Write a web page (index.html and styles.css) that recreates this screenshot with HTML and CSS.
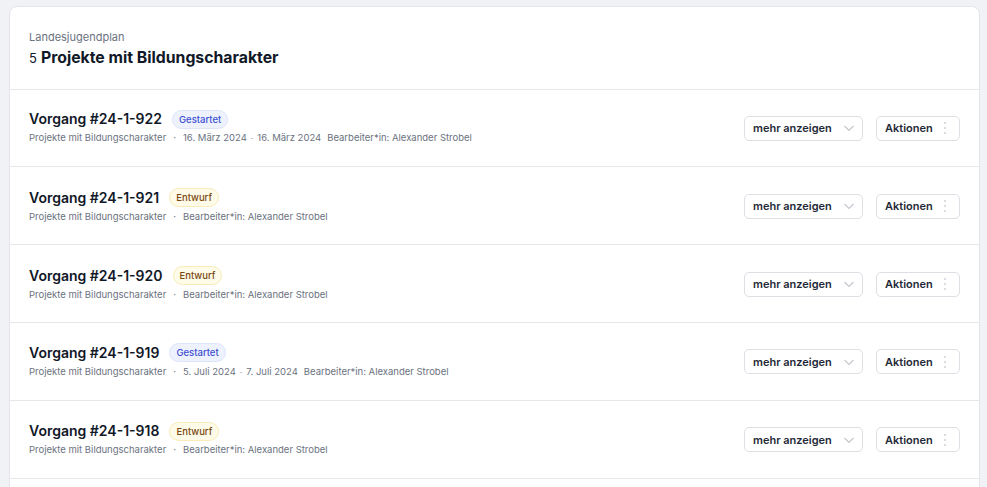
FILE: index.html
```html
<!DOCTYPE html>
<html lang="de">
<head>
<meta charset="utf-8">
<link rel="stylesheet" href="styles.css">
</head>
<body>
<div class="card">
  <header class="card-head">
    <div class="eyebrow">Landesjugendplan</div>
    <h1 class="heading"><span class="count">5</span>Projekte mit Bildungscharakter</h1>
  </header>
  <ul class="list">
    <li class="row">
      <div class="info">
        <div class="title-line"><span class="title">Vorgang #24-1-922</span><span class="badge badge-blue">Gestartet</span></div>
        <div class="meta"><span>Projekte mit Bildungscharakter</span><span class="dot">·</span><span>16. März 2024 <span class="dash">-</span> 16. März 2024</span><span class="owner">Bearbeiter*in: Alexander Strobel</span></div>
      </div>
      <div class="actions">
        <button class="btn btn-more">mehr anzeigen <svg class="chev" width="12" height="12" viewBox="0 0 12 12"><path d="M1.5 4l4.5 4.5 4.5-4.5" fill="none" stroke="#c3c7ce" stroke-width="1.1"/></svg></button>
        <button class="btn btn-act">Aktionen <svg class="dots" width="4" height="14" viewBox="0 0 4 14"><circle cx="2" cy="2" r="1.1" fill="#d1d5db"/><circle cx="2" cy="7" r="1.1" fill="#d1d5db"/><circle cx="2" cy="12" r="1.1" fill="#d1d5db"/></svg></button>
      </div>
    </li>
    <li class="row">
      <div class="info">
        <div class="title-line"><span class="title">Vorgang #24-1-921</span><span class="badge badge-amber">Entwurf</span></div>
        <div class="meta"><span>Projekte mit Bildungscharakter</span><span class="dot">·</span><span>Bearbeiter*in: Alexander Strobel</span></div>
      </div>
      <div class="actions">
        <button class="btn btn-more">mehr anzeigen <svg class="chev" width="12" height="12" viewBox="0 0 12 12"><path d="M1.5 4l4.5 4.5 4.5-4.5" fill="none" stroke="#c3c7ce" stroke-width="1.1"/></svg></button>
        <button class="btn btn-act">Aktionen <svg class="dots" width="4" height="14" viewBox="0 0 4 14"><circle cx="2" cy="2" r="1.1" fill="#d1d5db"/><circle cx="2" cy="7" r="1.1" fill="#d1d5db"/><circle cx="2" cy="12" r="1.1" fill="#d1d5db"/></svg></button>
      </div>
    </li>
    <li class="row">
      <div class="info">
        <div class="title-line"><span class="title">Vorgang #24-1-920</span><span class="badge badge-amber">Entwurf</span></div>
        <div class="meta"><span>Projekte mit Bildungscharakter</span><span class="dot">·</span><span>Bearbeiter*in: Alexander Strobel</span></div>
      </div>
      <div class="actions">
        <button class="btn btn-more">mehr anzeigen <svg class="chev" width="12" height="12" viewBox="0 0 12 12"><path d="M1.5 4l4.5 4.5 4.5-4.5" fill="none" stroke="#c3c7ce" stroke-width="1.1"/></svg></button>
        <button class="btn btn-act">Aktionen <svg class="dots" width="4" height="14" viewBox="0 0 4 14"><circle cx="2" cy="2" r="1.1" fill="#d1d5db"/><circle cx="2" cy="7" r="1.1" fill="#d1d5db"/><circle cx="2" cy="12" r="1.1" fill="#d1d5db"/></svg></button>
      </div>
    </li>
    <li class="row">
      <div class="info">
        <div class="title-line"><span class="title">Vorgang #24-1-919</span><span class="badge badge-blue">Gestartet</span></div>
        <div class="meta"><span>Projekte mit Bildungscharakter</span><span class="dot">·</span><span>5. Juli 2024 <span class="dash">-</span> 7. Juli 2024</span><span class="owner">Bearbeiter*in: Alexander Strobel</span></div>
      </div>
      <div class="actions">
        <button class="btn btn-more">mehr anzeigen <svg class="chev" width="12" height="12" viewBox="0 0 12 12"><path d="M1.5 4l4.5 4.5 4.5-4.5" fill="none" stroke="#c3c7ce" stroke-width="1.1"/></svg></button>
        <button class="btn btn-act">Aktionen <svg class="dots" width="4" height="14" viewBox="0 0 4 14"><circle cx="2" cy="2" r="1.1" fill="#d1d5db"/><circle cx="2" cy="7" r="1.1" fill="#d1d5db"/><circle cx="2" cy="12" r="1.1" fill="#d1d5db"/></svg></button>
      </div>
    </li>
    <li class="row">
      <div class="info">
        <div class="title-line"><span class="title">Vorgang #24-1-918</span><span class="badge badge-amber">Entwurf</span></div>
        <div class="meta"><span>Projekte mit Bildungscharakter</span><span class="dot">·</span><span>Bearbeiter*in: Alexander Strobel</span></div>
      </div>
      <div class="actions">
        <button class="btn btn-more">mehr anzeigen <svg class="chev" width="12" height="12" viewBox="0 0 12 12"><path d="M1.5 4l4.5 4.5 4.5-4.5" fill="none" stroke="#c3c7ce" stroke-width="1.1"/></svg></button>
        <button class="btn btn-act">Aktionen <svg class="dots" width="4" height="14" viewBox="0 0 4 14"><circle cx="2" cy="2" r="1.1" fill="#d1d5db"/><circle cx="2" cy="7" r="1.1" fill="#d1d5db"/><circle cx="2" cy="12" r="1.1" fill="#d1d5db"/></svg></button>
      </div>
    </li>
  </ul>
</div>
</body>
</html>
```

FILE: styles.css
```css
* { box-sizing: border-box; }
html, body { margin: 0; padding: 0; }
body {
  background: #f1f2f5;
  font-family: Inter, "Noto Sans", sans-serif;
  color: #111827;
  padding: 6px 7px 0 9px;
  height: 487px;
  overflow: hidden;
}
.card {
  background: #fff;
  border: 1px solid #e4e5ea;
  border-radius: 8px;
  padding-bottom: 40px;
}
.card-head {
  padding: 22px 19px 20.6px 19px;
  border-bottom: 1px solid #e5e7eb;
}
.eyebrow {
  font-size: 11px;
  line-height: 16px;
  color: #6b7280;
  margin-bottom: 3px;
}
.heading {
  margin: 0;
  font-size: 15.8px;
  line-height: 20px;
  font-weight: 700;
  color: #111827;
}
.count {
  font-weight: 400;
  font-size: 13px;
  margin-right: 4px;
}
.list { list-style: none; margin: 0; padding: 0; }
.row {
  display: flex;
  align-items: center;
  justify-content: space-between;
  height: 77.8px;
  padding: 1px 19px 1px 19px;
  border-bottom: 1px solid #e5e7eb;
}
.title-line {
  display: flex;
  align-items: center;
  gap: 10px;
}
.title {
  font-size: 14px;
  line-height: 20px;
  font-weight: 600;
  color: #111827;
}
.badge {
  display: inline-flex;
  align-items: center;
  height: 19px;
  padding: 0 6px;
  border-radius: 10px;
  font-size: 9.5px;
  font-weight: 500;
  border: 1px solid;
}
.badge-blue { background: #eef2ff; border-color: #dde5fb; color: #3c4ed0; }
.badge-amber { background: #fefbe8; border-color: #f8ecb8; color: #7a4a12; }
.meta {
  display: flex;
  gap: 6px;
  font-size: 9.5px;
  line-height: 14px;
  color: #6b7280;
  margin-top: 2px;
}
.meta .dot { padding: 0 1px; }
.meta .dash { font-size: 7px; color: #9ca3af; margin: 0 1px; }
.owner { margin-left: 0; }
.actions {
  display: flex;
  gap: 13px;
  align-items: center;
  margin-top: 1px;
}
.btn {
  display: inline-flex;
  align-items: center;
  justify-content: space-between;
  height: 25px;
  background: #fff;
  border: 1px solid #dcdfe4;
  border-radius: 5px;
  font-family: Inter, "Noto Sans", sans-serif;
  font-size: 11px;
  font-weight: 600;
  color: #1f2937;
  padding: 0 7px 0 8px;
}
.btn-more { width: 119px; }
.btn-act { width: 84px; padding-right: 12px; }
```
